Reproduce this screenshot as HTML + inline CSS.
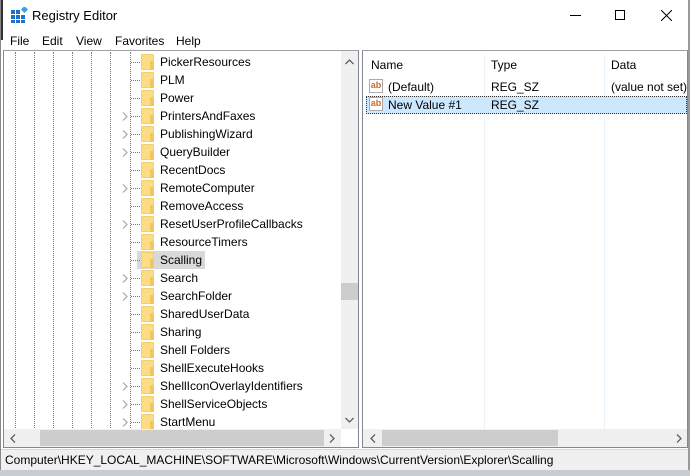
<!DOCTYPE html>
<html><head><meta charset="utf-8"><style>
*{margin:0;padding:0;box-sizing:border-box}
body{width:690px;height:476px;overflow:hidden;background:#fff;font-family:"Liberation Sans",sans-serif;font-size:12px;color:#000;position:relative}
.abs{position:absolute}
.row{position:absolute;left:160px;height:18px;line-height:20px;white-space:nowrap}
.fold{position:absolute;left:141px;width:13px;height:16px;background:#fcdc84;border:1px solid #efcf74;border-radius:1px}
.fold:after{content:"";position:absolute;right:-1px;bottom:-1px;width:4px;height:9px;background:#f3c75e}
.chev{position:absolute;left:122px;width:6px;height:9px}
.vd{position:absolute;top:52px;height:376px;width:1px;border-left:1px dotted #777}
.hd{position:absolute;left:131px;width:9px;border-top:1px dotted #777}
.ab{position:absolute;left:369px;width:14px;height:14px;border:1px solid #aaa;background:#fff;font-size:9px;font-weight:bold;color:#d2691e;line-height:11px;text-align:center}
</style></head><body>
<svg width="0" height="0" style="position:absolute"><defs><symbol id="cv" viewBox="0 0 6 9"><path d="M1 0.5L5 4.5L1 8.5" fill="none" stroke="#a6a6a6" stroke-width="1.2"/></symbol></defs></svg>
<div class="abs" style="left:0;top:0;width:3px;height:40px;background:#333"></div>
<div class="abs" style="left:0;top:0;width:690px;height:476px;border-left:1px solid #888;border-right:2px solid #999"></div>
<svg class="abs" style="left:11px;top:7px" width="17" height="17"><rect x="0" y="3" width="4" height="4" fill="#1e73c8"/><rect x="5" y="3" width="4" height="4" fill="#1e73c8"/><rect x="0" y="8" width="4" height="4" fill="#1e73c8"/><rect x="5" y="8" width="4" height="4" fill="#1e73c8"/><rect x="10" y="8" width="4" height="4" fill="#1e73c8"/><rect x="0" y="13" width="4" height="3" fill="#1e73c8"/><rect x="5" y="13" width="4" height="3" fill="#1e73c8"/><rect x="10" y="13" width="4" height="3" fill="#1e73c8"/><rect x="11" y="0" width="5" height="5" fill="#3aa0e8" transform="rotate(45 13.5 2.5)"/></svg>
<div class="abs" style="left:32px;top:8px;font-size:13px">Registry Editor</div>
<div class="abs" style="left:570px;top:15px;width:11px;height:1px;background:#000"></div>
<div class="abs" style="left:615px;top:10px;width:10px;height:10px;border:1px solid #000"></div>
<svg class="abs" style="left:661px;top:10px" width="11" height="11"><path d="M0 0L11 11M11 0L0 11" stroke="#000" stroke-width="1"/></svg>
<div class="abs" style="left:10px;top:34px">File</div>
<div class="abs" style="left:42px;top:34px">Edit</div>
<div class="abs" style="left:76px;top:34px">View</div>
<div class="abs" style="left:115px;top:34px">Favorites</div>
<div class="abs" style="left:176px;top:34px">Help</div>
<div class="abs" style="left:3px;top:50px;width:356px;height:398px;border:1px solid #828790;border-top-color:#a0a0a0"></div>
<div class="vd" style="left:15px"></div><div class="vd" style="left:34px"></div><div class="vd" style="left:53px"></div><div class="vd" style="left:72px"></div><div class="vd" style="left:91px"></div><div class="vd" style="left:110px"></div><div class="vd" style="left:130px"></div>
<div class="abs" style="left:137px;top:251px;width:68px;height:18px;background:#d9d9d9"></div>
<div class="hd" style="top:62px"></div><div class="fold" style="top:54px"></div><div class="row" style="top:52px">PickerResources</div>
<div class="hd" style="top:80px"></div><div class="fold" style="top:72px"></div><div class="row" style="top:70px">PLM</div>
<div class="hd" style="top:98px"></div><div class="fold" style="top:90px"></div><div class="row" style="top:88px">Power</div>
<svg class="chev" style="top:112px"><use href="#cv"/></svg><div class="hd" style="top:116px"></div><div class="fold" style="top:108px"></div><div class="row" style="top:106px">PrintersAndFaxes</div>
<svg class="chev" style="top:130px"><use href="#cv"/></svg><div class="hd" style="top:134px"></div><div class="fold" style="top:126px"></div><div class="row" style="top:124px">PublishingWizard</div>
<svg class="chev" style="top:148px"><use href="#cv"/></svg><div class="hd" style="top:152px"></div><div class="fold" style="top:144px"></div><div class="row" style="top:142px">QueryBuilder</div>
<div class="hd" style="top:170px"></div><div class="fold" style="top:162px"></div><div class="row" style="top:160px">RecentDocs</div>
<svg class="chev" style="top:184px"><use href="#cv"/></svg><div class="hd" style="top:188px"></div><div class="fold" style="top:180px"></div><div class="row" style="top:178px">RemoteComputer</div>
<div class="hd" style="top:206px"></div><div class="fold" style="top:198px"></div><div class="row" style="top:196px">RemoveAccess</div>
<svg class="chev" style="top:220px"><use href="#cv"/></svg><div class="hd" style="top:224px"></div><div class="fold" style="top:216px"></div><div class="row" style="top:214px">ResetUserProfileCallbacks</div>
<div class="hd" style="top:242px"></div><div class="fold" style="top:234px"></div><div class="row" style="top:232px">ResourceTimers</div>
<div class="hd" style="top:260px"></div><div class="fold" style="top:252px"></div><div class="row" style="top:250px">Scalling</div>
<svg class="chev" style="top:274px"><use href="#cv"/></svg><div class="hd" style="top:278px"></div><div class="fold" style="top:270px"></div><div class="row" style="top:268px">Search</div>
<svg class="chev" style="top:292px"><use href="#cv"/></svg><div class="hd" style="top:296px"></div><div class="fold" style="top:288px"></div><div class="row" style="top:286px">SearchFolder</div>
<div class="hd" style="top:314px"></div><div class="fold" style="top:306px"></div><div class="row" style="top:304px">SharedUserData</div>
<div class="hd" style="top:332px"></div><div class="fold" style="top:324px"></div><div class="row" style="top:322px">Sharing</div>
<div class="hd" style="top:350px"></div><div class="fold" style="top:342px"></div><div class="row" style="top:340px">Shell Folders</div>
<div class="hd" style="top:368px"></div><div class="fold" style="top:360px"></div><div class="row" style="top:358px">ShellExecuteHooks</div>
<svg class="chev" style="top:382px"><use href="#cv"/></svg><div class="hd" style="top:386px"></div><div class="fold" style="top:378px"></div><div class="row" style="top:376px">ShellIconOverlayIdentifiers</div>
<svg class="chev" style="top:400px"><use href="#cv"/></svg><div class="hd" style="top:404px"></div><div class="fold" style="top:396px"></div><div class="row" style="top:394px">ShellServiceObjects</div>
<svg class="chev" style="top:418px"><use href="#cv"/></svg><div class="hd" style="top:422px"></div><div class="fold" style="top:414px"></div><div class="row" style="top:412px">StartMenu</div>
<div class="abs" style="left:341px;top:51px;width:17px;height:378px;background:#f0f0f0"></div>
<div class="abs" style="left:341px;top:283px;width:17px;height:17px;background:#cdcdcd"></div>
<svg class="abs" style="left:345px;top:59px" width="9" height="6"><path d="M0.5 5L4.5 1L8.5 5" fill="none" stroke="#606060" stroke-width="1.3"/></svg>
<svg class="abs" style="left:345px;top:417px" width="9" height="6"><path d="M0.5 1L4.5 5L8.5 1" fill="none" stroke="#606060" stroke-width="1.3"/></svg>
<div class="abs" style="left:4px;top:429px;width:337px;height:18px;background:#f0f0f0"></div>
<div class="abs" style="left:40px;top:430px;width:284px;height:16px;background:#cdcdcd"></div>
<svg class="abs" style="left:10px;top:434px" width="6" height="9"><path d="M5 0.5L1 4.5L5 8.5" fill="none" stroke="#606060" stroke-width="1.3"/></svg>
<svg class="abs" style="left:329px;top:434px" width="6" height="9"><path d="M1 0.5L5 4.5L1 8.5" fill="none" stroke="#606060" stroke-width="1.3"/></svg>
<div class="abs" style="left:362px;top:50px;width:326px;height:398px;border:1px solid #828790;border-top-color:#a0a0a0"></div>
<div class="abs" style="left:484px;top:55px;width:1px;height:374px;background:#eaf2fa"></div>
<div class="abs" style="left:604px;top:55px;width:1px;height:374px;background:#eaf2fa"></div>
<div class="abs" style="left:371px;top:58px">Name</div>
<div class="abs" style="left:491px;top:58px">Type</div>
<div class="abs" style="left:611px;top:58px">Data</div>
<div class="ab" style="top:79px">ab</div>
<div class="abs" style="left:388px;top:80px">(Default)</div>
<div class="abs" style="left:491px;top:80px">REG_SZ</div>
<div class="abs" style="left:611px;top:80px">(value not set)</div>
<div class="abs" style="left:366px;top:96px;width:321px;height:18px;background:#cce8ff;border:1px dotted #333"></div>
<div class="ab" style="top:97px">ab</div>
<div class="abs" style="left:388px;top:98px">New Value #1</div>
<div class="abs" style="left:491px;top:98px">REG_SZ</div>
<div class="abs" style="left:363px;top:429px;width:324px;height:18px;background:#f0f0f0"></div>
<div class="abs" style="left:382px;top:430px;width:176px;height:16px;background:#cdcdcd"></div>
<svg class="abs" style="left:370px;top:434px" width="6" height="9"><path d="M5 0.5L1 4.5L5 8.5" fill="none" stroke="#606060" stroke-width="1.3"/></svg>
<svg class="abs" style="left:676px;top:434px" width="6" height="9"><path d="M1 0.5L5 4.5L1 8.5" fill="none" stroke="#606060" stroke-width="1.3"/></svg>
<div class="abs" style="left:1px;top:449px;width:687px;height:21px;background:#f0f0f0;border-top:1px solid #d7d7d7"></div>
<div class="abs" style="left:5px;top:453px">Computer\HKEY_LOCAL_MACHINE\SOFTWARE\Microsoft\Windows\CurrentVersion\Explorer\Scalling</div>
<div class="abs" style="left:0;top:470px;width:690px;height:6px;background:#c8ccd2"></div>
</body></html>
